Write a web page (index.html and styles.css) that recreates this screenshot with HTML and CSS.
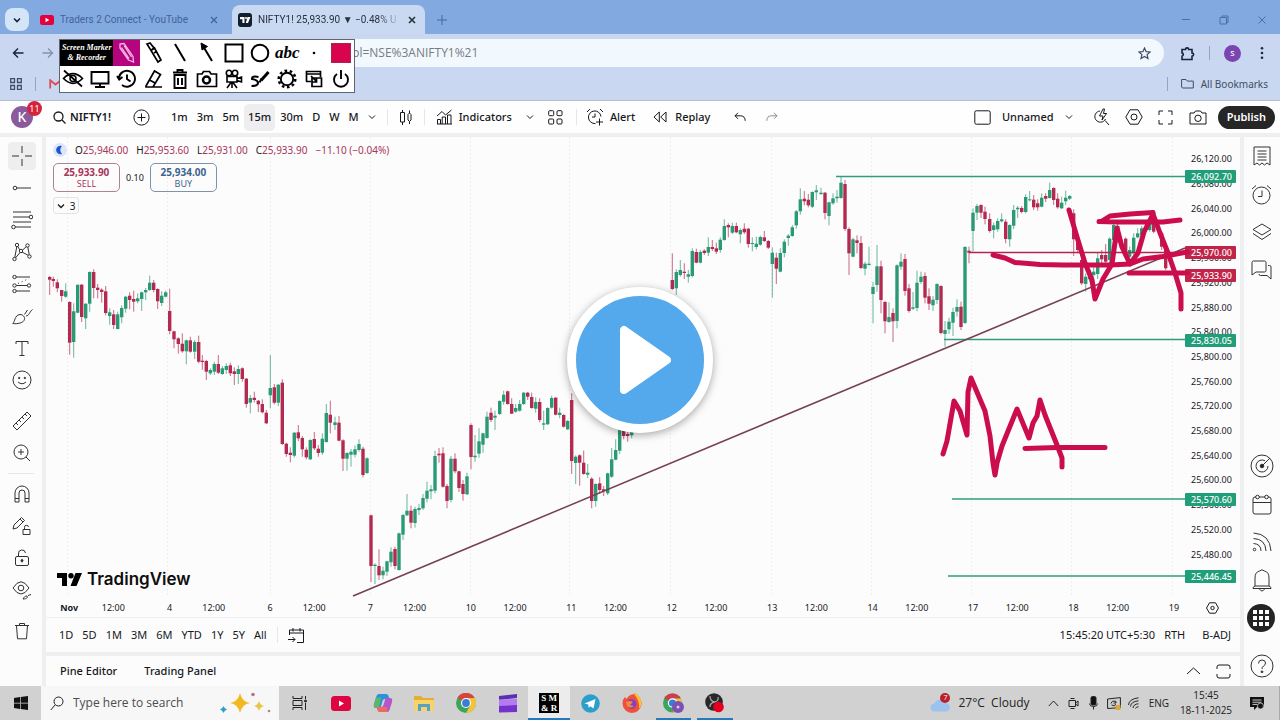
FILE: index.html
```html
<!DOCTYPE html>
<html lang="en">
<head>
<meta charset="utf-8">
<title>NIFTY1! 25,933.90 − TradingView</title>
<link rel="stylesheet" href="styles.css">
</head>
<body>
<header class="browser">
  <div class="tabstrip">
    <button class="tab-search" aria-label="Search tabs"><svg class="ico" width="10" height="10" viewBox="0 0 10 10"><path d="M2 3.5l3 3 3-3" stroke-width="1.6"/></svg></button>
    <div class="tab">
      <svg width="14" height="10" viewBox="0 0 14 10"><rect width="14" height="10" rx="2.5" fill="#e4003c"/><path d="M5.5 2.8v4.4L9.3 5z" fill="#fff"/></svg>
      <span class="tab-title">Traders 2 Connect - YouTube</span>
      <button class="tab-close" aria-label="Close tab"><svg class="ico" width="8" height="8" viewBox="0 0 8 8"><path d="M1 1l6 6M7 1L1 7" stroke-width="1.2"/></svg></button>
    </div>
    <div class="tab active">
      <svg width="14" height="14" viewBox="0 0 14 14"><rect width="14" height="14" rx="3" fill="#10202c"/><path d="M2 4h4.5v6H4.4V6.200H2zM9.500 4H12.500L10 10H7.800z" fill="#fff"/><circle cx="8" cy="5" r="1" fill="#fff"/></svg>
      <span class="tab-title fade">NIFTY1! 25,933.90 ▼ −0.48% U</span>
      <button class="tab-close" aria-label="Close tab"><svg class="ico" width="8" height="8" viewBox="0 0 8 8"><path d="M1 1l6 6M7 1L1 7" stroke-width="1.6"/></svg></button>
    </div>
    <button class="new-tab" aria-label="New tab"><svg class="ico" width="10" height="10" viewBox="0 0 10 10"><path d="M5 0v10M0 5h10"/></svg></button>
    <div class="window-controls">
      <button aria-label="Minimize"><svg class="ico" width="10" height="10" viewBox="0 0 10 10"><path d="M1 4.500h8"/></svg></button>
      <button aria-label="Restore"><svg class="ico" width="10" height="10" viewBox="0 0 10 10"><path d="M1 2.500h6.500V9H1zM3 2.500V1h6v6.500H7.500"/></svg></button>
      <button aria-label="Close"><svg class="ico" width="10" height="10" viewBox="0 0 10 10"><path d="M1.500 1.500l7 7M8.500 1.500l-7 7"/></svg></button>
    </div>
  </div>
  <div class="addressbar">
    <button aria-label="Back"><svg class="ico dark" width="12" height="12" viewBox="0 0 12 12"><path d="M11.500 6H1.500M6 1.500L1.500 6 6 10.500" stroke-width="1.4"/></svg></button>
    <button class="dim" aria-label="Forward"><svg class="ico" width="12" height="12" viewBox="0 0 12 12"><path d="M.5 6h10M6 1.500L10.500 6 6 10.500" stroke-width="1.300"/></svg></button>
    <div class="omnibox">
      <input class="url" type="text" aria-label="Address" value="symbol=NSE%3ANIFTY1%21">
      <button aria-label="Bookmark this page"><svg class="ico" width="13" height="13" viewBox="0 0 13 13"><path d="M6.500 1l1.600 3.700 4 .3-3 2.600.9 3.900-3.500-2.100L3 11.500l.9-3.900L.900 5l4-.3z" stroke-width="1.200"/></svg></button>
    </div>
    <button aria-label="Extensions"><svg class="ico dark" width="15" height="15" viewBox="0 0 15 15"><path d="M2 3.500h3.500a1.600 1.600 0 013.200 0H12V7a1.600 1.600 0 010 3.200V13.500H2V10.200a1.700 1.700 0 000-3.300z" stroke-width="1.600"/></svg></button>
    <i class="bar-sep"></i>
    <button class="profile" aria-label="Profile">s</button>
    <button aria-label="Menu"><svg width="4" height="14" viewBox="0 0 4 14" fill="#1d2742"><circle cx="2" cy="2.300" r="1.300"/><circle cx="2" cy="7" r="1.300"/><circle cx="2" cy="11.700" r="1.300"/></svg></button>
  </div>
  <nav class="bookmarks">
    <button aria-label="Apps"><svg class="ico" width="12" height="12" viewBox="0 0 12 12"><path d="M.700.700h3.800v3.800H.700zM7.500.700h3.800v3.800H7.500zM.700 7.500h3.800v3.800H.700zM7.500 7.500h3.800v3.800H7.500z" stroke-width="1.300"/></svg></button>
    <i class="bar-sep"></i>
    <button aria-label="Gmail"><svg width="13" height="10" viewBox="0 0 13 10"><path d="M1.200 9.500V1.200l5.300 4.300 5.300-4.300v8.300" fill="none" stroke="#dc4b57" stroke-width="1.800"/></svg></button>
    <span class="spacer"></span>
    <i class="bar-sep"></i>
    <button class="all-bookmarks"><svg class="ico" width="13" height="11" viewBox="0 0 13 11"><path d="M.600 9V1.500H5l1.300 1.600h6V10H1.500z"/></svg>All Bookmarks</button>
  </nav>
</header>

<div class="tv">
  <header class="topbar">
    <div class="avatar">K<span class="badge">11</span></div>
    <button class="symbol"><svg class="ico" width="13" height="13" viewBox="0 0 13 13"><circle cx="5.500" cy="5.500" r="4.500" stroke-width="1.300"/><path d="M9 9l3.500 3.500" stroke-width="1.300"/></svg>NIFTY1!</button>
    <button class="compare" aria-label="Compare symbol"><svg class="ico" width="17" height="17" viewBox="0 0 17 17"><circle cx="8.500" cy="8.500" r="7.600"/><path d="M8.500 4.500v8M4.500 8.500h8"/></svg></button>
    <div class="intervals">
      <button>1m</button><button>3m</button><button>5m</button><button class="on">15m</button><button>30m</button><button>D</button><button>W</button><button>M</button>
      <button aria-label="More intervals"><svg class="ico" width="8" height="6" viewBox="0 0 8 6"><path d="M1 1.500l3 3 3-3"/></svg></button>
    </div>
    <i class="sep"></i>
    <button class="style" aria-label="Candles"><svg class="ico" width="14" height="17" viewBox="0 0 14 17"><path d="M1.500 3.500h4v9.500h-4zM3.500 1v2.500M3.500 13v3M9 5.500l1.500-1.500L12 5.500v5.500L10.500 12.500 9 11zM10.500 1.500V4M10.500 12.500V15"/></svg></button>
    <i class="sep"></i>
    <button class="labelled"><svg class="ico" width="17" height="16" viewBox="0 0 17 16"><path d="M1 7l5-4.500L9.500 6l6-5M1.500 15v-4.500h3V15M6.200 15V8h3.300v7M11.500 15V6h3.500v9M1 15h15"/></svg>Indicators</button>
    <button class="chev" aria-label="Favourite indicators"><svg class="ico" width="8" height="6" viewBox="0 0 8 6"><path d="M1 1.500l3 3 3-3"/></svg></button>
    <button class="templates" aria-label="Indicator templates"><svg class="ico" width="15" height="15" viewBox="0 0 15 15"><rect x=".7" y=".7" width="5" height="5" rx="1"/><rect x="9" y=".7" width="5" height="5" rx="1"/><rect x=".7" y="9" width="5" height="5" rx="1"/><rect x="9" y="9" width="5" height="5" rx="1"/></svg></button>
    <i class="sep"></i>
    <button class="labelled alert"><svg class="ico" width="18" height="18" viewBox="0 0 18 18"><path d="M9.500 15.500A6.300 6.300 0 1115 8.500M9 5.500V9H6M1 4l3-3M14 1l3 3M13.500 10.500v7M10 14h7"/></svg>Alert</button>
    <button class="labelled replay"><svg class="ico" width="14" height="12" viewBox="0 0 14 12"><path d="M6.300 1v10L1 6zM13 1v10L7.700 6z"/></svg>Replay</button>
    <button class="undo" aria-label="Undo"><svg class="ico" width="12" height="10" viewBox="0 0 12 10"><path d="M4 .8L1 3.800l3 3M1 3.800h5.500c3 0 4.700 1.700 4.700 5"/></svg></button>
    <button class="undo dim" aria-label="Redo"><svg class="ico" width="12" height="10" viewBox="0 0 12 10"><path d="M8 .8l3 3-3 3M11 3.800H5.500C2.500 3.800.8 5.500.8 8.800"/></svg></button>
    <span class="spacer"></span>
    <button class="layout"><svg class="ico" width="17" height="15" viewBox="0 0 17 15"><rect x=".8" y=".8" width="15.400" height="13.400" rx="1.500"/></svg>Unnamed<svg class="ico" width="8" height="6" viewBox="0 0 8 6"><path d="M1 1.500l3 3 3-3"/></svg></button>
    <div class="tools-right">
      <button aria-label="Quick search"><svg class="ico" width="17" height="18" viewBox="0 0 17 18"><path d="M7 3A5.600 5.600 0 1012.500 11M12 12.500l4 4.500M10 1L6.500 8H10l-1 4 4.500-6.500H10.500L11.500 1z"/></svg></button>
      <button aria-label="Settings"><svg class="ico" width="18" height="16" viewBox="0 0 18 16"><path d="M5 .8h8L17.200 8 13 15.200H5L.8 8z"/><circle cx="9" cy="8" r="3"/></svg></button>
      <button aria-label="Fullscreen"><svg class="ico" width="15" height="15" viewBox="0 0 15 15"><path d="M1 5V1h4M10 1h4v4M14 10v4h-4M5 14H1v-4"/></svg></button>
      <button aria-label="Snapshot"><svg class="ico" width="18" height="15" viewBox="0 0 18 15"><path d="M1 3h4l1.500-2h5L13 3h4v11H1z"/><circle cx="9" cy="8.300" r="3.200"/></svg></button>
    </div>
    <button class="publish">Publish</button>
  </header>

  <aside class="left-tools">
    <div>
      <button class="on" aria-label="Cross"><svg class="ico" width="20" height="20" viewBox="0 0 20 20"><path d="M10 0v7M10 13v7M0 10h7M13 10h7"/></svg></button>
      <button aria-label="Trend line"><svg class="ico" width="20" height="20" viewBox="0 0 20 20"><circle cx="3" cy="10" r="1.800"/><path d="M5 10h14"/></svg></button>
      <button aria-label="Fibonacci"><svg class="ico" width="22" height="22" viewBox="0 0 22 22"><path d="M2 3h18M2 8h16M2 13h18M4 18h16"/><circle cx="20" cy="8" r="1.800" fill="#fcfcfc"/><circle cx="2.500" cy="18" r="1.800" fill="#fcfcfc"/></svg></button>
      <button aria-label="Patterns"><svg class="ico" width="20" height="20" viewBox="0 0 20 20"><path d="M2.500 17L5 3.500l4 6 6.500-6L17.500 14 9 9.500z"/><g fill="#fcfcfc"><circle cx="5" cy="3" r="1.700"/><circle cx="15.500" cy="3.500" r="1.700"/><circle cx="9" cy="9" r="1.700"/><circle cx="2.500" cy="17" r="1.700"/><circle cx="17.500" cy="14.500" r="1.700"/></g></svg></button>
      <button aria-label="Forecasting"><svg class="ico" width="20" height="20" viewBox="0 0 20 20"><path d="M4 3h14M4 11.500h12M4 17h14"/><path d="M6 9.500l11-5" stroke-dasharray="1 3"/><g fill="#fcfcfc"><circle cx="2.500" cy="3" r="1.700"/><circle cx="2.500" cy="11.500" r="1.700"/><circle cx="17" cy="11.500" r="1.700"/><circle cx="2.500" cy="17" r="1.700"/></g></svg></button>
      <button aria-label="Brush"><svg class="ico" width="21" height="17" viewBox="0 0 21 17"><path d="M.8 15.500C3 14 2.500 7 8 6.500c3 0 5 2.500 4.500 4.700-.8 4-7.500 5-11.700 4.300zM12.500 6.500l3-4.500M14 8c3 0 4-5 6.500-6.500"/></svg></button>
      <button aria-label="Text"><svg class="ico" width="16" height="17" viewBox="0 0 16 17"><path d="M2 4V1.500h12V4M8 1.500v14M5.500 15.500h5"/></svg></button>
      <button aria-label="Icons"><svg class="ico" width="20" height="20" viewBox="0 0 20 20"><circle cx="10" cy="10" r="9"/><path d="M6 12q4 3.500 8 0"/><circle cx="7.200" cy="8" r=".7" fill="#333"/><circle cx="12.800" cy="8" r=".7" fill="#333"/></svg></button>
    </div>
    <div>
      <button aria-label="Measure"><svg class="ico" width="20" height="20" viewBox="0 0 20 20"><path d="M1 15L15 1l4 4L5 19zM4 12l2 2M7 9l2 2M10 6l2 2M13 3l2 2"/></svg></button>
      <button aria-label="Zoom in"><svg class="ico" width="18" height="18" viewBox="0 0 18 18"><circle cx="8" cy="8" r="7"/><path d="M13 13l4 4M8 5v6M5 8h6"/></svg></button>
    </div>
    <div class="ruled">
      <button aria-label="Magnet"><svg class="ico" width="16" height="18" viewBox="0 0 16 18"><path d="M1 17V8a7 7 0 0114 0v9h-4V8a3 3 0 00-6 0v9zM1 13.500h4M11 13.500h4"/></svg></button>
      <button aria-label="Stay in drawing mode"><svg class="ico" width="20" height="20" viewBox="0 0 20 20"><path d="M1 13l1-4L9.500 1.500l3 3L5 12zM8 3l3 3M11 13.500h7v5h-7zM12.500 13.500v-2a2 2 0 014-.5"/></svg></button>
      <button aria-label="Lock drawings"><svg class="ico" width="16" height="18" viewBox="0 0 16 18"><rect x="1.500" y="7.500" width="13" height="9" rx="1.500"/><path d="M4.500 7.500V5a3.500 3.500 0 017-1M8 11v2.500"/><circle cx="8" cy="11.500" r="1" fill="#222"/></svg></button>
      <button aria-label="Hide drawings"><svg class="ico" width="20" height="20" viewBox="0 0 20 20"><path d="M1 8q8-12.500 16 0-8 12-16 0z"/><circle cx="9" cy="8" r="2.800"/><path d="M11 19c1-2 2-3 4-3 1 1.500 0 3-4 3zM16 15.500l3-1"/></svg></button>
    </div>
    <div>
      <button aria-label="Remove objects"><svg class="ico" width="16" height="18" viewBox="0 0 16 18"><path d="M1 3.500h14M5.500 3.500v-2h5v2M2.500 3.500l1 13.300h9l1-13.300"/></svg></button>
    </div>
  </aside>

  <main class="chart">
    <div class="plot">
      <svg id="plot" viewBox="46 137 1139 461" preserveAspectRatio="none" role="img" aria-label="NIFTY1! 15 minute candles">
        <g id="grid" class="grid"></g>
        <g id="candles"></g>
        <g class="level">
          <path d="M836 176.500H1185M944 339.500H1185M952 499H1185M948 576H1185"/>
        </g>
        <path d="M969 252.500H1185" stroke="#b0264c" stroke-width="1.300"/>
        <path d="M353 596L1185 248" stroke="#77404f" stroke-width="1.500"/>
        <g class="ink">
          <path d="M993 255L1005 258 1015 262.500 1040 264.500 1063 265H1110L1130 264 1143 259 1163 256.500 1187 252"/>
          <path d="M1069 210L1077 237 1085 263 1092 280 1095 299 1103 279 1112 264 1117 228 1122 247 1130 264 1138 253 1144 232 1153 214 1160 233 1168 253 1175 273 1181 293V309"/>
          <path d="M1099 221.500L1117 222H1163L1180 220M1102 221L1110 216 1130 214 1153 212.500"/>
          <path d="M1129 273H1187"/>
          <path d="M943 454L947 441 954 401 960 411 967 435 968 392 971 378 985 411 990 436 993 463 995 475 997 463 1002 446 1017 409 1029 438 1033 423 1037 416 1040 400 1045 415 1057 445 1062 458V467"/>
          <path d="M1025 448.500L1057 447.500H1105"/>
        </g>
      </svg>
      <div class="overlay">
        <div class="legend">
          <svg width="14" height="14" viewBox="0 0 14 14"><circle cx="7" cy="7" r="7" fill="#dbe6fb"/><path d="M9 3a4.300 4.300 0 100 8 5.500 5.500 0 010-8z" fill="#1d55d0"/></svg>
          <span>O<b>25,946.00</b></span><span>H<b>25,953.60</b></span><span>L<b>25,931.00</b></span><span>C<b>25,933.90</b></span><b>−11.10 (−0.04%)</b>
        </div>
        <div class="trade">
          <button class="sell"><strong>25,933.90</strong>SELL</button>
          <span>0.10</span>
          <button class="buy"><strong>25,934.00</strong>BUY</button>
        </div>
        <button class="collapse"><svg class="ico" width="8" height="6" viewBox="0 0 8 6"><path d="M1 1.500l3 3 3-3" stroke-width="1.300"/></svg>3</button>
      </div>
      <div class="brand"><svg width="25" height="13" viewBox="0 0 25 13"><path d="M0 0h10v13H5V5H0zM18.500 0H25l-5.500 13H13.500z"/><circle cx="14" cy="2.700" r="2.700"/></svg>TradingView</div>
    </div>
    <div class="prices">
      <ol id="ticks"></ol>
      <span class="tag up t1">26,092.70</span>
      <span class="tag down t2">25,970.00</span>
      <span class="tag down t3">25,933.90</span>
      <span class="tag up t4">25,830.05</span>
      <span class="tag up t5">25,570.60</span>
      <span class="tag up t6">25,446.45</span>
    </div>
    <div class="times">
      <ol>
        <li class="month">Nov</li><li class="noon">12:00</li><li>4</li><li class="noon">12:00</li><li>6</li><li class="noon">12:00</li><li>7</li><li class="noon">12:00</li><li>10</li><li class="noon">12:00</li><li>11</li><li class="noon">12:00</li><li>12</li><li class="noon">12:00</li><li>13</li><li class="noon">12:00</li><li>14</li><li class="noon">12:00</li><li>17</li><li class="noon">12:00</li><li>18</li><li class="noon">12:00</li><li>19</li>
      </ol>
      <button aria-label="Axis settings"><svg class="ico" width="13" height="12" viewBox="0 0 13 12"><path d="M3.500.8h6l3 5.200-3 5.200h-6L.500 6z"/><circle cx="6.500" cy="6" r="1.700"/></svg></button>
    </div>
    <div class="ranges">
      <button>1D</button><button>5D</button><button>1M</button><button>3M</button><button>6M</button><button>YTD</button><button>1Y</button><button>5Y</button><button>All</button>
      <i class="sep"></i>
      <button class="goto" aria-label="Go to date"><svg class="ico" width="17" height="17" viewBox="0 0 17 17"><path d="M1.500 8V3h14v12.500H9M1.500 6h14M5 1v3.500M12 1v3.500M0 12.500h7M4.500 10L7 12.500 4.500 15"/></svg></button>
      <span class="spacer"></span>
      <button>15:45:20 UTC+5:30</button><button>RTH</button><button class="adj">B-ADJ</button>
    </div>
  </main>

  <footer class="panels">
    <button>Pine Editor</button><button>Trading Panel</button>
    <span class="spacer"></span>
    <div class="panel-actions">
      <button aria-label="Open panel"><svg class="ico" width="15" height="8" viewBox="0 0 15 8"><path d="M1 7l6.500-6L14 7"/></svg></button>
      <button aria-label="Maximize panel"><svg class="ico" width="15" height="15" viewBox="0 0 15 15"><path d="M1 5V3q0-2 2-2h9q2 0 2 2v2M14 10v2q0 2-2 2H3q-2 0-2-2v-2"/></svg></button>
    </div>
  </footer>

  <aside class="right-tools">
    <div>
      <button aria-label="Watchlist"><svg class="ico" width="18" height="20" viewBox="0 0 18 20"><path d="M1 1h16v18l-3-2-2.500 2L9 17l-2.500 2L4 17l-3 2zM4.500 5h9M4.500 8h9M4.500 11h9M4.500 14h9"/></svg></button>
      <button aria-label="Alerts"><svg class="ico" width="21" height="21" viewBox="0 0 21 21"><circle cx="10.500" cy="11.500" r="8.500"/><path d="M11 6.500v6H7M1 5l4-3.500M16 1.500L20 5"/></svg></button>
      <button aria-label="Object tree"><svg class="ico" width="20" height="18" viewBox="0 0 20 18"><path d="M10 1l9 5.500-9 5.500-9-5.500zM1 10.500L10 16.500l9-6"/></svg></button>
      <button aria-label="Chats"><svg class="ico" width="21" height="20" viewBox="0 0 21 20"><path d="M1 15V2.500Q1 1 2.500 1h11Q15 1 15 2.500v8q0 1.500-1.500 1.500H5zM17 5.500h1.500Q20 5.500 20 7v12l-4-3.500H9.500Q8 15.500 8 14"/></svg></button>
    </div>
    <div class="bottom">
      <button aria-label="Screener"><svg class="ico" width="24" height="24" viewBox="0 0 24 24"><circle cx="12" cy="12" r="11"/><path d="M18 12a6 6 0 11-3-5.200M12 12l8-8"/><circle cx="12" cy="12" r="1.800" fill="#222"/></svg></button>
      <button aria-label="Calendar"><svg class="ico" width="20" height="21" viewBox="0 0 20 21"><path d="M4 3H3Q1 3 1 5v13q0 2 2 2h14q2 0 2-2V5q0-2-2-2h-1M7 3h6M1 8.500h18"/><circle cx="5.500" cy="3" r="1.800"/><circle cx="14.500" cy="3" r="1.800"/></svg></button>
      <button aria-label="News"><svg class="ico" width="20" height="20" viewBox="0 0 20 20"><path d="M1.500 1Q18 2 19 19M1.500 6.500Q13.500 7 14 19M1.500 11.500Q9 12 9 19"/><circle cx="2.500" cy="17.500" r="1.300"/></svg></button>
      <button aria-label="Notifications"><svg class="ico" width="20" height="23" viewBox="0 0 20 23"><path d="M3 17V9q0-6 4.500-7Q10-.5 12.500 2 17 3 17 9v8l2 1.500v1H1v-1zM3 17h14M7.500 20q2.500 4 5 0"/></svg></button>
      <button class="apps" aria-label="Products"><svg width="16" height="16" viewBox="0 0 16 16" fill="#fff"><path d="M0 0h4v4H0zM6 0h4v4H6zM12 0h4v4h-4zM0 6h4v4H0zM6 6h4v4H6zM12 6h4v4h-4zM0 12h4v4H0zM6 12h4v4H6zM12 12h4v4h-4z"/></svg></button>
      <button class="help" aria-label="Help"><svg class="ico" width="24" height="24" viewBox="0 0 24 24"><circle cx="12" cy="12" r="11"/><path d="M8.500 9.500q0-3.500 3.500-3.500t3.500 3q0 2-2 3-1.500 1-1.500 3"/><circle cx="12" cy="17.800" r=".9" fill="#222"/></svg></button>
    </div>
  </aside>
</div>

<footer class="taskbar">
  <button class="start" aria-label="Start"><svg width="14" height="14" viewBox="0 0 14 14" fill="#111"><path d="M0 2l6-1v5.700H0zM6.700.9L14 0v6.700H6.700zM0 7.400h6v5.700l-6-1zM6.700 7.400H14V14l-7.300-1z"/></svg></button>
  <label class="search">
    <svg class="ico" width="14" height="15" viewBox="0 0 14 15"><circle cx="8.500" cy="5.500" r="4.500"/><path d="M5 9L.8 14"/></svg>
    <input type="text" placeholder="Type here to search">
    <svg width="52" height="22" viewBox="0 0 52 22"><path d="M20 1q2 9 10 10-8 1-10 10-2-9-10-10 8-1 10-10z" fill="#f3b81e"/><path d="M39 9q1 4 5 5-4 1-5 5-1-4-5-5 4-1 5-5z" fill="#e8c747"/><path d="M3.500 14q1 3 3.500 3.500-2.500.5-3.500 3.500-1-3-3.500-3.500 2.500-.5 3.500-3.500z" fill="#2b9fc4"/><circle cx="33" cy="2.500" r="1.800" fill="#b0748c"/><circle cx="49" cy="19" r="1.300" fill="#a98a7c"/></svg>
  </label>
  <div class="apps-row">
    <button aria-label="Task view"><svg class="ico" width="15" height="14" viewBox="0 0 15 14"><path d="M1 0v2.500h9V0M1 14v-2.500h9V14M1 4.500h9v5H1zM13.500 0v3M13.500 7v7"/><circle cx="13.500" cy="5" r="1" fill="#222"/></svg></button>
    <button aria-label="YouTube"><svg width="20" height="15" viewBox="0 0 20 15"><rect width="20" height="15" rx="3.500" fill="#df0540"/><path d="M8 4.500v6l5-3z" fill="#fff"/></svg></button>
    <button aria-label="Copilot"><svg width="20" height="20" viewBox="0 0 20 20"><path d="M6 1h7q2 0 2.500 2L16.500 6H12q-2 0-2.500 2L7.500 15H3q-3 0-2-4L3.500 3Q4 1 6 1z" fill="#2a92d8"/><path d="M1 11L3 4.500h5L6 15H3q-3 0-2-4z" fill="#59b86b"/><path d="M14 19H7q-2 0-2.500-2L3.500 14H8q2 0 2.500-2L12.500 5H17q3 0 2 4l-2.500 8Q16 19 14 19z" fill="#b556c8"/><path d="M14 19H7q-2 0-2.500-2L3.500 14H14z" fill="#ef6a5b"/></svg></button>
    <button aria-label="File Explorer"><svg width="20" height="17" viewBox="0 0 20 17"><path d="M0 1h7l2 2h11v13H0z" fill="#e4ad33"/><path d="M0 5h20v11H0z" fill="#f6d468"/><path d="M4 16V9h12v7h-3v-4H7v4z" fill="#5b9fc4"/></svg></button>
    <button aria-label="Chrome"><svg width="20" height="20" viewBox="0 0 20 20"><circle cx="10" cy="10" r="10" fill="#3ba65a"/><path d="M10 10L1.300 5A10 10 0 0118.700 5z" fill="#d8433b"/><path d="M10 5h8.700A10 10 0 0110 20l4.300-7.500z" fill="#f2c33a"/><circle cx="10" cy="10" r="5" fill="#fff"/><circle cx="10" cy="10" r="3.900" fill="#3c7cd8"/></svg></button>
    <button aria-label="Clipchamp"><svg width="20" height="20" viewBox="0 0 20 20"><path d="M1 3l18-2v4L1 7z" fill="#5b2fb0"/><path d="M1 6.500L19 6v7H1z" fill="#b47af0"/><path d="M1 13l18-1v7l-18 .5z" fill="#7531cc"/></svg></button>
    <button class="current" aria-label="Screen Marker"><span class="smr"><span>S M</span><span>&amp; R</span></span></button>
    <button aria-label="Telegram"><svg width="19" height="19" viewBox="0 0 19 19"><circle cx="9.500" cy="9.500" r="9.300" fill="#2b9fcb"/><path d="M3.500 9.500L14.500 5l-2 9.500-3.200-2.300-1.600 1.600-.5-3.200z" fill="#fff"/></svg></button>
    <button aria-label="Firefox"><svg width="20" height="20" viewBox="0 0 20 20"><path d="M3 4q1 1 1.500 2Q7 1.500 12 1l1-1q5 3 6.300 8.500A9.500 9.500 0 11.500 10Q.800 6 3 4z" fill="#f0503c"/><path d="M12 1l1-1q5 3 6.300 8.500.5 4-2.300 7Q18 8 12 1z" fill="#fcc52e"/><circle cx="9.500" cy="11" r="4.800" fill="#8040c4"/><path d="M4 9q4-2 7 0l-3 3 4 1q-4 3-7 0z" fill="#f98a32"/></svg></button>
    <button class="running" aria-label="Chrome profile"><svg width="21" height="20" viewBox="0 0 21 20"><circle cx="9.500" cy="10" r="9.500" fill="#3ba65a"/><path d="M9.500 10L1.200 5.300A9.500 9.500 0 0117.800 5.300z" fill="#c9404a"/><path d="M9.500 5.500h8.500A9.500 9.500 0 019.500 19.500l4-7z" fill="#ecc24a"/><circle cx="9.500" cy="10" r="4.700" fill="#fff"/><circle cx="9.500" cy="10" r="3.600" fill="#3c7cd8"/><circle cx="15" cy="14" r="6" fill="#7e50b4"/><circle cx="15" cy="14" r="1.500" fill="#d9c9ee"/></svg></button>
    <button class="running" aria-label="OBS Studio"><svg width="20" height="20" viewBox="0 0 20 20"><circle cx="9" cy="9" r="8.800" fill="#2a2728"/><path d="M5 3q0 5 4.500 6Q14 8 13 4M9.500 9Q5 10 5 14" fill="none" stroke="#a9a4a4" stroke-width="1.300"/><circle cx="13.500" cy="14" r="5.300" fill="#e3001f"/></svg></button>
  </div>
  <span class="spacer"></span>
  <button class="weather"><span class="cloud"><svg width="21" height="14" viewBox="0 0 21 14"><path d="M4.500 13.500a4 4 0 010-8 6 6 0 0111-.5 4.300 4.300 0 011 8.500z" fill="#9cc3ee"/></svg><span class="count">7</span></span>27°C&nbsp; Cloudy</button>
  <div class="tray">
    <button aria-label="Hidden icons"><svg class="ico" width="11" height="7" viewBox="0 0 11 7"><path d="M.8 6l4.700-5 4.700 5"/></svg></button>
    <button aria-label="Meet now"><svg class="ico" width="11" height="13" viewBox="0 0 11 13"><path d="M1 3.500h6.500v6H1zM7.500 6L10 4v5L7.500 7M2.500 1.500h4M2.500 11.500h4"/></svg></button>
    <button aria-label="Microphone"><svg class="ico" width="9" height="14" viewBox="0 0 9 14"><rect x="2" y=".5" width="5" height="8.500" rx="1.500" fill="#111"/><path d="M.5 7.500q0 3 4 3t4-3M4.500 10.500v3"/></svg></button>
    <button aria-label="Update"><svg class="ico" width="14" height="13" viewBox="0 0 14 13"><path d="M.6 2L13.400.600v10L.600 11.500zM4 6.500Q5 3 9 4.500v1.500H6.500M9 7.500Q7 9.500 4.500 8"/><rect x="8.500" y="8" width="5" height="5" fill="#dfa83c" stroke="none"/></svg></button>
    <button aria-label="Network"><svg class="ico" width="11" height="12" viewBox="0 0 11 12"><path d="M.5 8Q1 2 10.500.800M2.500 9.500Q3 4.500 10.500 3.800M5 11q.5-4 5.500-4.200M7.500 11.500q.5-1.700 3-1.700"/></svg></button>
  </div>
  <button class="lang">ENG</button>
  <button class="clock"><span>15:45</span><span>18-11-2025</span></button>
  <button class="notes" aria-label="Notifications"><svg width="14" height="13" viewBox="0 0 14 13"><path d="M0 0h14v10H7l-3 3v-3H0z" fill="#111"/><path d="M2.500 3h9M2.500 5.200h9M2.500 7.400h5" stroke="#ccc"/><circle cx="10.500" cy="9" r="3" fill="#111" stroke="#ccc" stroke-width=".8"/></svg></button>
</footer>

<div class="marker" role="toolbar" aria-label="Screen Marker and Recorder">
  <span class="marker-logo"><span>Screen Marker</span><span>&amp; Recorder</span></span>
  <button class="picked" aria-label="Pencil"><svg class="ico" width="20" height="22" viewBox="0 0 20 22"><path d="M3 2l4-.5 9 13 .5 5.500-5-2L3 6zM4.500 5.500l7.500 11M7 3.500l7.500 11.500" stroke="#f3b8e6" stroke-width="1.300"/></svg></button>
  <button aria-label="Marker"><svg class="ico" width="18" height="22" viewBox="0 0 18 22"><path d="M2 2l3-1 4 5-3 2.500zM6 8.500L9.500 6 16 18l-3 2zM9 11l2.500-1.500" stroke-width="1.700"/></svg></button>
  <button aria-label="Line"><svg class="ico" width="18" height="22" viewBox="0 0 18 22"><path d="M4 2l10 17" stroke-width="2"/></svg></button>
  <button aria-label="Arrow"><svg class="ico" width="18" height="22" viewBox="0 0 18 22"><path d="M5 4l9 15" stroke-width="2"/><path d="M3 1l6.500 3.500L4 8z" fill="#000"/></svg></button>
  <button aria-label="Rectangle"><svg class="ico" width="20" height="20" viewBox="0 0 20 20"><path d="M1.500 1.500h17v17h-17z" stroke-width="2"/></svg></button>
  <button aria-label="Ellipse"><svg class="ico" width="20" height="20" viewBox="0 0 20 20"><circle cx="10" cy="10" r="8.300" stroke-width="2"/></svg></button>
  <button class="abc">abc</button>
  <button aria-label="Pen size"><svg width="4" height="4" viewBox="0 0 4 4"><circle cx="2" cy="2" r="1.300"/></svg></button>
  <button aria-label="Colour"><i class="swatch"></i></button>
  <button aria-label="Hide"><svg class="ico" width="22" height="20" viewBox="0 0 22 20"><path d="M1.500 9.500Q11 0 20.500 9.500 11 19 1.500 9.500zM2 1.500l18 16" stroke-width="1.700"/><circle cx="11" cy="9.500" r="3" stroke-width="1.500"/></svg></button>
  <button aria-label="Whiteboard"><svg class="ico" width="20" height="19" viewBox="0 0 20 19"><path d="M1.500 2h17v11.500h-17zM10 13.500V17M5 17h10" stroke-width="1.900"/></svg></button>
  <button aria-label="History"><svg class="ico" width="21" height="20" viewBox="0 0 21 20"><path d="M3 9A8 8 0 116 16M1 7l2.200 3.500L6.500 8M11 5.500V10l3.500 2.500" stroke-width="1.900"/></svg></button>
  <button aria-label="Eraser"><svg class="ico" width="20" height="20" viewBox="0 0 20 20"><path d="M2 17L10.500 2l6 3.500L9 18H2zM5.500 11l6.500 3.500M8 18h10" stroke-width="1.700"/></svg></button>
  <button aria-label="Clear"><svg class="ico" width="16" height="20" viewBox="0 0 16 20"><path d="M2.500 6h11v13h-11zM1 3.500h14M5.500 3V1h5v2M6 9v7M10 9v7" stroke-width="1.900"/></svg></button>
  <button aria-label="Screenshot"><svg class="ico" width="22" height="18" viewBox="0 0 22 18"><path d="M1.500 4H6l1.500-2.500h6L15 4h5.500v12.500h-19z" stroke-width="1.700"/><circle cx="10.500" cy="10" r="3.500" stroke-width="2.500"/></svg></button>
  <button aria-label="Record"><svg class="ico" width="19" height="20" viewBox="0 0 19 20"><circle cx="5" cy="4" r="2.700" stroke-width="1.600"/><circle cx="11" cy="4" r="2.700" stroke-width="1.600"/><path d="M3 7.500h10V13H3zM13 9.500l4.500-1.500v5L13 11.500M8 13v6M7 13.500L3 19M9 13.500L13 19" stroke-width="1.600"/></svg></button>
  <button aria-label="Smooth"><svg class="ico" width="20" height="20" viewBox="0 0 20 20"><path d="M8.500 8Q1.500 6.500 2 10q6 1 6 4t-6.500 3M9.500 13.500l2-4" stroke-width="2"/><path d="M11 11.500L18.500 3" stroke-width="3"/></svg></button>
  <button aria-label="Settings"><svg class="ico" width="20" height="20" viewBox="0 0 20 20"><circle cx="10" cy="10" r="6.200" stroke-width="1.900"/><circle cx="10" cy="10" r="8.300" stroke-width="2.500" stroke-dasharray="2.600 2.600"/></svg></button>
  <button aria-label="Minimise"><svg class="ico" width="18" height="18" viewBox="0 0 18 18"><path d="M1.500 11.500V1.500h14V7M1 4h15M1 11.500h5M7 16.500V8h9.500v8.500zM6 6l5.500 5.500M11.500 8v4h-4" stroke-width="1.700"/></svg></button>
  <button aria-label="Quit"><svg class="ico" width="18" height="20" viewBox="0 0 18 20"><path d="M5 5a7 7 0 108 0M9 1v9" stroke-width="1.900"/></svg></button>
</div>

<button class="play" aria-label="Play video"><svg width="52" height="70" viewBox="0 0 52 70"><path d="M5 5v60l43-30z" fill="#fff" stroke="#fff" stroke-width="8" stroke-linejoin="round"/></svg></button>
<script src="chart.js"></script>
</body>
</html>
```
FILE: styles.css
```css
* { box-sizing: border-box; }
body { margin: 0; min-height: 100vh; display: flex; flex-direction: column; position: relative; background: #fcfcfc; color: #16181c; font: 11px/16px "Noto Sans", "Open Sans", sans-serif; }
button { display: flex; align-items: center; justify-content: center; margin: 0; padding: 0; border: 0; background: none; color: inherit; font: inherit; white-space: nowrap; }
input { border: 0; background: none; min-width: 0; color: inherit; font: inherit; outline: 0; }
ol { list-style: none; margin: 0; padding: 0; }
svg { flex: none; }
.ico { fill: none; stroke: currentColor; stroke-width: 1; }
.spacer { flex: 1; }
.dim { opacity: .5; }

/* browser frame */
.browser { background: #c9d8f0; border-bottom: 1px solid #b4bfd2; height: 101px; display: flex; flex-direction: column; color: #3f4d66; }
.tabstrip { display: flex; align-items: center; height: 34px; padding: 5px 8px 0 5px; background: #82aae0; font-family: Roboto, sans-serif; }
.tab-search { width: 24px; height: 23px; border-radius: 8px; background: #d5e5f8; color: #16233f; margin-right: 11px; }
.tab { display: flex; align-items: center; width: 192px; height: 29px; gap: 6px; color: #42639b; }
.tab-title { flex: 1; overflow: hidden; white-space: nowrap; font-size: 10px; }
.tab .tab-close { width: 12px; height: 12px; margin-right: 12px; }
.tab.active { width: 193px; height: 29px; background: #c9d9f1; border-radius: 8px 8px 0 0; padding-left: 6px; color: #27313f; }
.tab.active .tab-close { margin-right: 7px; }
.fade { mask-image: linear-gradient(90deg, #000 85%, transparent); }
.new-tab { width: 34px; height: 24px; color: #4466a3; }
.window-controls { margin-left: auto; display: flex; gap: 18px; color: #4d70ac; }
.window-controls button { width: 20px; height: 20px; }
.addressbar { display: flex; align-items: center; height: 36px; padding: 2px 16px 0 12px; }
.addressbar > .dim { margin-left: 18px; }
.dark { color: #16233f; }
.omnibox { flex: 1; display: flex; align-items: center; height: 28px; margin: 0 16px 0 22px; padding: 0 13px 0 244px; border-radius: 14px; background: #f1f8fe; }
.url { flex: 1; color: #777c82; font: 12px/16px "Open Sans", sans-serif; }
.bar-sep { width: 1px; height: 14px; background: #94a5c4; }
.addressbar .bar-sep { margin: 0 14px 0 14px; }
.profile { width: 17px; height: 17px; border-radius: 50%; background: #7a45b0; color: #fff; font-size: 9px; margin-right: 19px; }
.bookmarks { display: flex; align-items: center; height: 27px; padding: 0 12px 0 10px; }
.bookmarks .bar-sep { margin: 0 13px; }
.all-bookmarks { gap: 7px; font: 10px/16px "Noto Sans", sans-serif; }

/* charting application frame */
.tv { flex: 1; display: grid; grid-template: 32px 1fr 30px / 42px 1fr 36px; grid-template-areas: "top top top" "left chart right" "left panels right"; gap: 4px; background: #eeeff0; }
.tv > * { background: #fcfcfc; }
.topbar { grid-area: top; display: flex; align-items: center; padding: 0 5px 0 11px; font-weight: 500; background: #fefefe; }
.avatar { position: relative; width: 22px; height: 22px; border-radius: 50%; background: #8a5a9c; color: #fff; font: 500 14px/22px "Noto Sans", sans-serif; text-align: center; margin-right: 20px; }
.badge { position: absolute; left: 16px; top: -5px; width: 15px; height: 15px; border-radius: 50%; background: #d6223c; font: 9px/15px "Noto Sans", sans-serif; }
.symbol { gap: 4px; font-weight: 600; }
.compare { margin: 0 17px 0 22px; }
.intervals { display: flex; height: 27px; gap: 1px; }
.intervals button { padding: 0 4px; border-radius: 5px; }
.intervals .on { background: #eeeef0; }
.sep { width: 1px; height: 16px; background: #e5e6e9; }
.topbar > .sep { margin: 0 7px; }
.style { width: 22px; }
.labelled { gap: 6px; margin-left: 4px; }
.chev { margin-left: 14px; }
.templates { margin: 0 6px 0 14px; }
.alert { margin-left: 2px; }
.replay { margin-left: 18px; gap: 8px; }
.undo { margin-left: 24px; }
.undo + .undo { margin-left: 20px; }
.layout { gap: 11px; }
.tools-right { display: flex; margin: 0 4px 0 13px; }
.tools-right button { width: 32px; }
.publish { height: 23px; padding: 0 9px; border-radius: 12px; background: #262626; color: #fff; font-weight: 600; }

.left-tools { grid-area: left; padding-top: 3px; color: #303236; }
.left-tools div { display: flex; flex-direction: column; gap: 4px; padding: 2px 0 2px 8px; }
.left-tools button { width: 28px; height: 28px; border-radius: 4px; }
.left-tools .on { background: #eeeeef; }
.left-tools div + div { margin-top: 9px; }
.left-tools .ruled { position: relative; }
.left-tools .ruled::before { content: ""; position: absolute; left: 8px; right: 8px; top: -5px; border-top: 1px solid #e7e8ea; }
.right-tools { grid-area: right; display: flex; flex-direction: column; color: #303236; }
.right-tools button { width: 35px; height: 38px; }
.bottom { display: flex; flex-direction: column; margin-top: auto; padding-bottom: 1px; }
.right-tools .apps { width: 28px; height: 28px; margin: 5px 3px; border-radius: 50%; background: #242424; }
.bottom .help { margin-top: 10px; }

/* chart pane */
.chart { grid-area: chart; display: grid; grid-template: 1fr 20px 34px / 1fr 55px; }
.plot { position: relative; z-index: 1; min-height: 300px; }
#plot { position: absolute; inset: 0; width: 100%; height: 100%; overflow: visible; fill: none; }
.grid { stroke: #eceef0; stroke-dasharray: 2 2; }
.level { stroke: #2f9c80; stroke-width: 1.5; }
.ink { stroke: #cb0d4e; stroke-width: 5; stroke-linecap: round; stroke-linejoin: round; }
.up-candle { fill: #2a9a75; stroke: #2a9a75; }
.down-candle { fill: #b32a50; stroke: #b32a50; }
.overlay { position: absolute; left: 7px; top: 5px; }
.legend { display: flex; align-items: center; gap: 8px; font-size: 10px; }
.legend b { color: #a8365a; font-weight: 400; }
.trade { display: flex; align-items: center; gap: 6px; margin-top: 5px; font-size: 9px; }
.trade button { flex-direction: column; width: 67px; height: 29px; border: 1px solid; border-radius: 5px; line-height: 11px; }
.trade strong { font-size: 10px; line-height: 12px; }
.sell { color: #a8365a; }
.buy { color: #3d6491; }
.trade .sell { border-color: #ac8490; }
.trade .buy { border-color: #7e93ab; }
.collapse { gap: 5px; width: 26px; height: 17px; margin-top: 5px; border: 1px solid #e2e3e6; border-radius: 3px; font-size: 10px; }
.brand { position: absolute; left: 11px; bottom: 8px; display: flex; align-items: center; gap: 5px; font: 600 17px/22px Inter, sans-serif; color: #0e0e0e; }
.prices { position: relative; padding: 10px 0 31px; font-size: 9px; }
.prices ol { height: 100%; display: flex; flex-direction: column; }
.prices li { flex: 1; display: flex; align-items: center; padding-left: 6px; }
.tag { position: absolute; left: 0; width: 51px; padding-left: 6px; border-radius: 1px; line-height: 13px; margin-top: -6px; color: #fff; font-weight: 500; }
.up { background: #1f9e79; }
.down { background: #c22449; }
.t1 { top: 8.5%; }
.t2 { top: 25%; }
.t3 { top: 30%; }
.t4 { top: 44%; }
.t5 { top: 78.6%; }
.t6 { top: 95.2%; }
.times { grid-column: 1 / 3; display: flex; align-items: center; font-size: 9px; padding-right: 15px; border-bottom: 1px solid #eff0f1; }
.times ol { flex: 1; display: grid; grid-template-columns: repeat(23, minmax(0, 1fr)); margin-left: -2px; text-align: center; }
.times .noon { padding-right: 12px; }
.times .month { font-weight: 700; }
.times button { width: 26px; }
.ranges { grid-column: 1 / 3; display: flex; align-items: center; gap: 9px; padding: 0 9px 0 13px; }
.ranges .sep { margin: 0 1px; }
.ranges .adj { margin-left: 8px; }
.panels { grid-area: panels; display: flex; align-items: center; padding: 0 9px 0 14px; gap: 27px; font-weight: 500; }
.panel-actions { display: flex; gap: 15px; }

/* desktop task bar */
.taskbar { display: flex; height: 34px; background: #d1d1d1; font: 11px/14px "Open Sans", sans-serif; color: #222; }
.start { width: 41px; }
.search { display: flex; align-items: center; gap: 9px; width: 238px; padding: 0 7px 0 9px; background: #f7f7f7; font-size: 12px; }
.search input { flex: 1; padding: 0; }
.search input::placeholder { color: #4c4c4c; opacity: 1; }
.apps-row { display: flex; flex: 0 0 457px; }
.apps-row button { flex: 1; border-bottom: 2px solid transparent; border-top: 2px solid transparent; }
.apps-row .current { background: #ececec; border-color: #ececec #ececec #2679bd; }
.apps-row .running { border-image: linear-gradient(90deg, transparent 8%, #2679bd 8%, #2679bd 92%, transparent 92%) 0 0 2 0; }
.smr { display: flex; flex-direction: column; width: 20px; height: 20px; background: #000; color: #fff; font: 700 9px/10px "Liberation Serif", serif; }
.weather { gap: 7px; font-size: 12px; }
.cloud { position: relative; display: flex; padding-top: 4px; }
.count { position: absolute; left: 10px; top: -1px; width: 10px; height: 10px; border-radius: 50%; background: #b9202c; color: #fff; font-size: 7px; line-height: 10px; }
.tray { display: flex; margin-left: 14px; }
.tray button { width: 20px; }
.lang { margin-left: 5px; font-size: 10px; }
.clock { flex-direction: column; width: 62px; font-size: 10px; line-height: 15px; margin-left: 6px; }
.notes { width: 43px; padding-right: 2px; border-right: 1px solid #aaa; }

/* floating annotation toolbar */
.marker { position: absolute; left: 59px; top: 39px; width: 296px; height: 54px; display: grid; grid-template: 1fr 1fr / repeat(11, 1fr); background: #fff; border: 1px solid #5f6572; color: #000; }
.marker-logo { grid-column: span 2; display: flex; flex-direction: column; justify-content: center; background: #000; color: #fff; text-align: center; white-space: nowrap; font: italic 700 8px/10px "Liberation Serif", serif; }
.picked { background: #b6047f; }
.abc { font: italic 700 17px/20px "Liberation Serif", serif; }
.swatch { width: 20px; height: 20px; background: #d8044e; border: 1px solid #aa2650; }

/* video control */
.play { position: absolute; left: 50%; top: 50%; z-index: 2; transform: translate(-50%, -50%); width: 146px; height: 146px; padding-left: 10px; border: 9px solid #fff; border-radius: 50%; background: #54a8ec; box-shadow: 0 2px 8px rgba(0, 0, 0, .35); }
```
FILE: chart.js
```js
// Candles as "centre top bottom high low direction", in thirds of a chart unit,
// grouped in sections that each have their own origin.
const sections = [
  { x: 0, y: 130, bars: `149 441 449 438 495 r,160 447 453 440 470 r,172 457 475 448 487 r,185 480 498 480 515 r,197 484 500 460 503 g,209 516 638 514 674 r,221 544 636 520 683 g,233 464 548 464 550 g,245 464 561 462 576 r,257 521 565 520 597 g,269 426 521 424 545 g,281 426 474 418 505 r,293 473 480 462 505 r,305 479 486 475 518 r,317 484 549 468 556 r,329 547 558 535 584 g,341 553 585 540 597 r,353 553 597 545 598 g,365 534 562 526 580 g,377 500 536 498 548 g,389 497 510 487 538 r,401 507 515 482 545 r,413 505 514 490 520 g,425 487 507 485 543 g,437 480 487 474 510 g,449 458 480 437 483 g,461 458 480 450 487 r,473 477 514 475 537 r,485 497 519 484 528 g,497 487 500 482 502 g,509 543 603 476 613 r,522 604 628 602 655 r,535 625 642 622 671 r,547 641 664 610 668 r,559 631 664 629 703 g,571 631 665 620 668 r,584 636 665 630 687 g,596 636 695 617 700 r,607 692 696 675 719 r` },
  { x: 0, y: 370, bars: `619 -27 5 -30 30 r,631 0 10 -5 15 g,643 -18 5 -25 15 g,655 -18 8 -45 12 r,667 -5 12 -12 15 g,679 -12 0 -20 12 g,691 -14 10 -22 18 r,703 4 12 -8 45 r,715 -3 12 -14 42 g,727 -5 27 -8 35 r,739 26 102 24 113 r,751 84 98 75 130 g,763 83 90 65 97 r,775 92 103 90 126 r,787 102 127 88 130 r,799 128 160 120 162 r,811 54 76 -45 115 g,823 52 98 42 103 r,835 44 98 42 108 g,847 38 222 28 225 r,859 221 252 218 260 r,871 248 255 232 277 r,883 188 257 186 262 g,895 187 205 165 213 r,907 204 238 198 260 r,919 239 262 232 268 r,931 210 268 208 270 g,943 207 235 186 240 r,955 236 249 225 260 r,967 206 248 190 255 g,979 129 216 102 218 g,991 134 158 92 190 r,1005 157 165 140 180 g,1017 158 212 138 214 r,1029 211 266 208 303 r,1041 249 266 247 302 g,1053 245 254 237 290 g,1065 238 254 226 262 g,1077 222 240 208 245 g,1089 236 315 230 322 r,1101 265 309 262 312 g,1113 436 588 434 636 r,1125 584 588 580 642 g,1137 588 616 538 630 r,1149 602 616 590 628 g,1161 574 605 572 618 g,1173 545 577 532 590 g,1185 537 588 530 598 r,1197 490 600 488 602 g` },
  { x: 400, y: 360, bars: `9 465 524 462 540 g,21 452 466 402 468 g,33 452 488 437 505 r,45 447 489 440 503 g,57 444 450 432 465 g,69 414 445 402 450 g,81 392 416 365 427 g,93 388 394 375 418 g,105 288 392 272 400 g,117 281 286 264 308 r,129 280 380 262 383 r,141 378 423 372 445 r,153 296 420 288 427 g,165 296 334 280 340 r,177 334 384 332 396 r,189 372 402 360 422 r,201 349 403 338 405 g,213 195 291 190 328 r,225 287 292 225 305 g,237 244 281 205 293 g,249 220 254 218 278 g,261 170 234 155 236 g,273 158 180 143 186 r,285 167 173 152 210 g,299 123 162 121 165 g,311 104 125 92 134 g,323 94 132 92 134 r,335 132 161 115 162 r,347 144 155 132 158 g,359 132 152 120 155 g,371 98 132 96 135 g,383 98 110 96 120 r,395 111 144 98 146 r,407 126 146 112 158 g,419 126 180 115 187 r,431 190 194 152 210 g,443 144 193 142 195 g,455 114 143 107 146 g,467 113 164 111 166 r,479 158 165 143 175 g,491 165 200 162 203 r,503 183 208 180 210 g,515 120 303 100 342 r,527 290 309 286 372 g,539 286 308 283 377 r,551 308 342 272 344 r,563 338 344 312 354 g,575 356 423 352 445 r,587 372 423 370 440 g,599 370 390 352 402 r,611 388 393 378 408 r,623 340 400 338 405 g,635 298 350 264 354 g,647 270 299 238 301 g,659 205 272 203 282 g,671 212 228 205 238 r,683 222 228 215 245 r,695 215 226 210 235 g` },
  { x: 660, y: 150, bars: `37 390 417 310 420 r,49 366 415 358 435 g,61 360 375 330 380 g,73 365 369 340 387 r,85 373 380 360 398 g,97 303 378 295 382 g,109 306 338 296 340 r,121 306 338 300 340 g,133 302 309 298 315 r,145 291 308 262 318 g,157 291 297 270 303 r,169 295 305 278 312 r,181 269 300 262 308 g,193 228 270 208 272 g,205 225 232 220 262 r,217 228 248 218 252 g,229 228 247 218 250 r,241 240 253 235 280 g,253 236 247 220 252 r,265 236 282 234 293 r,277 279 282 262 304 g,289 281 291 260 298 g,301 261 284 257 287 g,313 262 273 243 276 r,325 273 293 270 297 r,337 308 342 292 443 g,349 323 356 308 402 r,361 309 365 295 367 g,373 275 309 268 322 g,385 257 264 252 287 g,397 232 258 225 260 g,409 184 226 180 236 g,421 148 184 115 194 g,433 146 154 123 166 r,445 149 166 132 172 r,457 126 170 124 174 g,469 121 127 105 150 g,483 128 132 113 135 g,495 128 189 126 208 r,507 157 198 155 226 g,519 145 160 130 164 g,531 140 145 120 158 g,543 98 144 80 146 g,555 102 237 90 243 r,567 237 310 232 375 r,579 268 320 263 322 g,591 271 279 256 310 r,603 279 354 258 357 r,615 341 356 335 376 g,627 341 345 290 347 g,639 411 432 396 520 g,651 349 405 285 425 g,663 349 450 332 490 r,675 456 514 453 550 r,687 501 516 457 518 g,699 489 514 475 576 r,711 346 513 343 535 g,723 335 350 310 360 g,735 327 423 312 437 r,747 415 483 402 488 r,759 472 476 426 480 g,771 398 474 362 484 g,783 380 396 365 402 g,795 378 443 367 460 r,807 439 461 415 480 r,819 449 466 438 483 g,831 402 450 400 462 g,843 408 549 406 553 r,855 540 552 513 590 g,867 515 538 503 552 g,879 486 518 473 558 g,891 471 485 448 500 g,903 470 531 455 540 r,915 291 519 288 522 g,927 302 308 290 340 r` },
  { x: 930, y: 150, bars: `129 188 243 175 305 g,141 168 188 162 210 g,153 165 188 163 204 r,165 185 207 170 223 r,179 207 243 190 248 r,191 226 240 218 265 g,203 213 238 205 245 g,215 208 214 190 217 g,227 215 267 208 280 r,239 225 268 223 290 g,251 180 227 165 237 g,263 173 178 168 204 g,275 174 186 168 190 r,287 141 186 133 190 g,299 148 151 123 154 g,311 149 172 135 180 r,323 160 172 148 182 r,335 143 170 130 172 g,347 138 146 130 156 r,359 120 144 98 146 g,371 114 150 112 165 r,383 146 172 130 176 r,395 158 175 140 177 g,407 143 154 122 165 g,419 138 146 135 150 g,431 190 268 178 318 r,443 268 300 265 310 r,455 330 400 320 405 r,467 380 402 370 425 g,479 372 388 365 395 g,491 365 375 350 385 g,503 325 372 308 387 g,515 315 328 300 340 r,527 315 335 282 345 r,539 266 330 262 340 g,551 225 270 223 300 g,563 228 260 220 280 r,587 266 310 262 320 r,599 300 320 290 325 g,611 263 310 250 315 g,623 250 262 235 265 g,635 235 255 228 260 g,659 220 240 200 245 g,671 190 245 180 250 r,695 250 290 245 300 r,707 290 355 285 360 r` }
];

const bars = [];
for (const s of sections) {
  for (const row of s.bars.split(",")) {
    const p = row.split(" ");
    const [cx, top, bottom, high, low] = p.slice(0, 5).map(Number);
    const x = (s.x + cx / 3).toFixed(1);
    const y = v => (s.y + v / 3).toFixed(1);
    bars.push(`<g class="${p[5] === "g" ? "up" : "down"}-candle"><path d="M${x} ${y(high)}V${y(low)}" stroke-width=".7"/><path d="M${x} ${y(top)}V${y(bottom)}" stroke-width="3.4"/></g>`);
  }
}
document.getElementById("candles").innerHTML = bars.join("");

let lines = "";
for (const x of [67, 167, 270, 370, 470, 569, 670, 771, 871, 971, 1071, 1172]) {
  lines += `<path d="M${x}.5 137V597"/>`;
}
document.getElementById("grid").innerHTML = lines;

let ticks = "";
for (let price = 26120; price >= 25480; price -= 40) {
  ticks += `<li>${price.toLocaleString("en-US", { minimumFractionDigits: 2 })}</li>`;
}
document.getElementById("ticks").innerHTML = ticks;
```
